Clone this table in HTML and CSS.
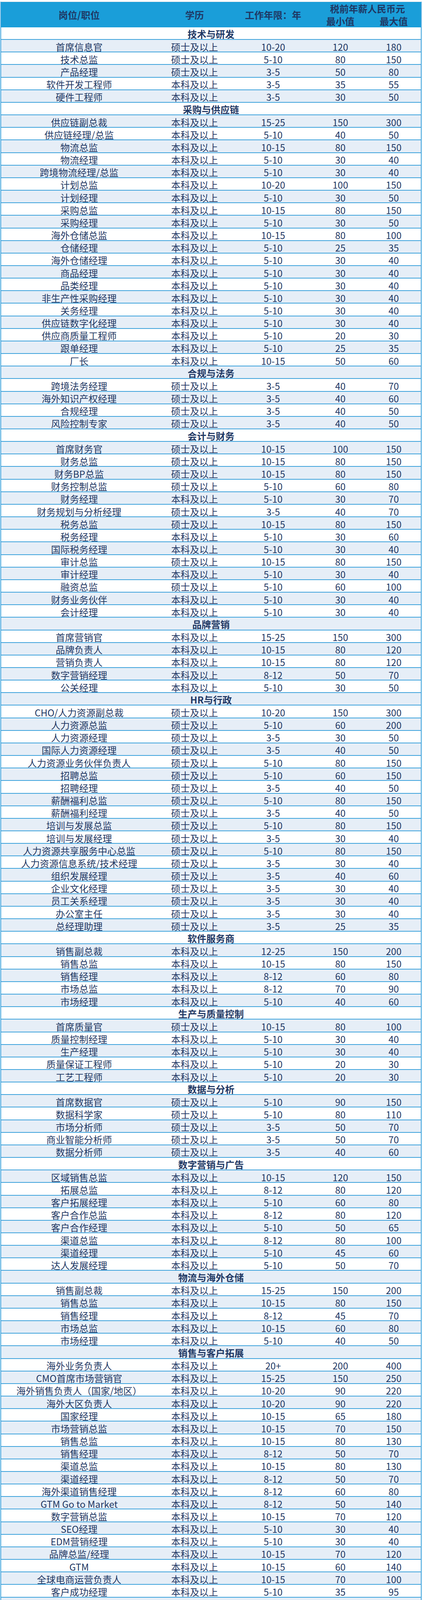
FILE: index.html
```html
<!DOCTYPE html>
<html lang="zh-CN">
<head>
<meta charset="utf-8">
<title>岗位薪酬表</title>
<link rel="stylesheet" href="styles.css">
</head>
<body>
<div class="sheet">
<div class="head">
<div class="hc h-job">岗位/职位</div>
<div class="hc h-edu">学历</div>
<div class="hc h-yrs">工作年限：年</div>
<div class="hc h-pay">税前年薪人民币元</div>
<div class="hc h-min">最小值</div>
<div class="hc h-max">最大值</div>
</div>
<div class="rows">
<div class="row sec">技术与研发</div>
<div class="row"><span>首席信息官</span><span>硕士及以上</span><span>10-20</span><span>120</span><span>180</span></div>
<div class="row"><span>技术总监</span><span>硕士及以上</span><span>5-10</span><span>80</span><span>150</span></div>
<div class="row"><span>产品经理</span><span>硕士及以上</span><span>3-5</span><span>50</span><span>80</span></div>
<div class="row"><span>软件开发工程师</span><span>本科及以上</span><span>3-5</span><span>35</span><span>55</span></div>
<div class="row"><span>硬件工程师</span><span>本科及以上</span><span>3-5</span><span>30</span><span>50</span></div>
<div class="row sec">采购与供应链</div>
<div class="row"><span>供应链副总裁</span><span>本科及以上</span><span>15-25</span><span>150</span><span>300</span></div>
<div class="row"><span>供应链经理/总监</span><span>本科及以上</span><span>5-10</span><span>40</span><span>50</span></div>
<div class="row"><span>物流总监</span><span>本科及以上</span><span>10-15</span><span>80</span><span>150</span></div>
<div class="row"><span>物流经理</span><span>本科及以上</span><span>5-10</span><span>30</span><span>40</span></div>
<div class="row"><span>跨境物流经理/总监</span><span>本科及以上</span><span>5-10</span><span>30</span><span>40</span></div>
<div class="row"><span>计划总监</span><span>本科及以上</span><span>10-20</span><span>100</span><span>150</span></div>
<div class="row"><span>计划经理</span><span>本科及以上</span><span>5-10</span><span>30</span><span>50</span></div>
<div class="row"><span>采购总监</span><span>本科及以上</span><span>10-15</span><span>80</span><span>150</span></div>
<div class="row"><span>采购经理</span><span>本科及以上</span><span>5-10</span><span>30</span><span>50</span></div>
<div class="row"><span>海外仓储总监</span><span>本科及以上</span><span>10-15</span><span>80</span><span>100</span></div>
<div class="row"><span>仓储经理</span><span>本科及以上</span><span>5-10</span><span>25</span><span>35</span></div>
<div class="row"><span>海外仓储经理</span><span>本科及以上</span><span>5-10</span><span>30</span><span>40</span></div>
<div class="row"><span>商品经理</span><span>本科及以上</span><span>5-10</span><span>30</span><span>40</span></div>
<div class="row"><span>品类经理</span><span>本科及以上</span><span>5-10</span><span>30</span><span>40</span></div>
<div class="row"><span>非生产性采购经理</span><span>本科及以上</span><span>5-10</span><span>30</span><span>40</span></div>
<div class="row"><span>关务经理</span><span>本科及以上</span><span>5-10</span><span>30</span><span>40</span></div>
<div class="row"><span>供应链数字化经理</span><span>本科及以上</span><span>5-10</span><span>30</span><span>40</span></div>
<div class="row"><span>供应商质量工程师</span><span>本科及以上</span><span>5-10</span><span>20</span><span>30</span></div>
<div class="row"><span>跟单经理</span><span>本科及以上</span><span>5-10</span><span>25</span><span>35</span></div>
<div class="row"><span>厂长</span><span>本科及以上</span><span>10-15</span><span>50</span><span>60</span></div>
<div class="row sec">合规与法务</div>
<div class="row"><span>跨境法务经理</span><span>硕士及以上</span><span>3-5</span><span>40</span><span>70</span></div>
<div class="row"><span>海外知识产权经理</span><span>硕士及以上</span><span>3-5</span><span>40</span><span>60</span></div>
<div class="row"><span>合规经理</span><span>硕士及以上</span><span>3-5</span><span>40</span><span>50</span></div>
<div class="row"><span>风险控制专家</span><span>硕士及以上</span><span>3-5</span><span>40</span><span>50</span></div>
<div class="row sec">会计与财务</div>
<div class="row"><span>首席财务官</span><span>硕士及以上</span><span>10-15</span><span>100</span><span>150</span></div>
<div class="row"><span>财务总监</span><span>硕士及以上</span><span>10-15</span><span>80</span><span>150</span></div>
<div class="row"><span>财务BP总监</span><span>硕士及以上</span><span>10-15</span><span>80</span><span>150</span></div>
<div class="row"><span>财务控制总监</span><span>硕士及以上</span><span>5-10</span><span>60</span><span>80</span></div>
<div class="row"><span>财务经理</span><span>本科及以上</span><span>5-10</span><span>30</span><span>70</span></div>
<div class="row"><span>财务规划与分析经理</span><span>硕士及以上</span><span>3-5</span><span>40</span><span>70</span></div>
<div class="row"><span>税务总监</span><span>硕士及以上</span><span>10-15</span><span>80</span><span>150</span></div>
<div class="row"><span>税务经理</span><span>本科及以上</span><span>5-10</span><span>30</span><span>60</span></div>
<div class="row"><span>国际税务经理</span><span>本科及以上</span><span>5-10</span><span>30</span><span>40</span></div>
<div class="row"><span>审计总监</span><span>硕士及以上</span><span>10-15</span><span>80</span><span>150</span></div>
<div class="row"><span>审计经理</span><span>本科及以上</span><span>5-10</span><span>30</span><span>40</span></div>
<div class="row"><span>融资总监</span><span>硕士及以上</span><span>5-10</span><span>60</span><span>100</span></div>
<div class="row"><span>财务业务伙伴</span><span>本科及以上</span><span>5-10</span><span>30</span><span>40</span></div>
<div class="row"><span>会计经理</span><span>本科及以上</span><span>5-10</span><span>30</span><span>40</span></div>
<div class="row sec">品牌营销</div>
<div class="row"><span>首席营销官</span><span>本科及以上</span><span>15-25</span><span>150</span><span>300</span></div>
<div class="row"><span>品牌负责人</span><span>本科及以上</span><span>10-15</span><span>80</span><span>120</span></div>
<div class="row"><span>营销负责人</span><span>本科及以上</span><span>10-15</span><span>80</span><span>120</span></div>
<div class="row"><span>数字营销经理</span><span>本科及以上</span><span>8-12</span><span>50</span><span>70</span></div>
<div class="row"><span>公关经理</span><span>本科及以上</span><span>5-10</span><span>30</span><span>50</span></div>
<div class="row sec">HR与行政</div>
<div class="row"><span>CHO/人力资源副总裁</span><span>硕士及以上</span><span>10-20</span><span>150</span><span>300</span></div>
<div class="row"><span>人力资源总监</span><span>硕士及以上</span><span>5-10</span><span>60</span><span>200</span></div>
<div class="row"><span>人力资源经理</span><span>硕士及以上</span><span>3-5</span><span>30</span><span>50</span></div>
<div class="row"><span>国际人力资源经理</span><span>硕士及以上</span><span>3-5</span><span>40</span><span>50</span></div>
<div class="row"><span>人力资源业务伙伴负责人</span><span>硕士及以上</span><span>5-10</span><span>80</span><span>150</span></div>
<div class="row"><span>招聘总监</span><span>硕士及以上</span><span>5-10</span><span>60</span><span>150</span></div>
<div class="row"><span>招聘经理</span><span>硕士及以上</span><span>3-5</span><span>40</span><span>50</span></div>
<div class="row"><span>薪酬福利总监</span><span>硕士及以上</span><span>5-10</span><span>80</span><span>150</span></div>
<div class="row"><span>薪酬福利经理</span><span>硕士及以上</span><span>3-5</span><span>40</span><span>50</span></div>
<div class="row"><span>培训与发展总监</span><span>硕士及以上</span><span>5-10</span><span>80</span><span>150</span></div>
<div class="row"><span>培训与发展经理</span><span>硕士及以上</span><span>3-5</span><span>30</span><span>40</span></div>
<div class="row"><span>人力资源共享服务中心总监</span><span>硕士及以上</span><span>5-10</span><span>80</span><span>150</span></div>
<div class="row"><span>人力资源信息系统/技术经理</span><span>硕士及以上</span><span>3-5</span><span>30</span><span>40</span></div>
<div class="row"><span>组织发展经理</span><span>硕士及以上</span><span>3-5</span><span>40</span><span>60</span></div>
<div class="row"><span>企业文化经理</span><span>硕士及以上</span><span>3-5</span><span>30</span><span>40</span></div>
<div class="row"><span>员工关系经理</span><span>硕士及以上</span><span>3-5</span><span>30</span><span>40</span></div>
<div class="row"><span>办公室主任</span><span>硕士及以上</span><span>3-5</span><span>30</span><span>40</span></div>
<div class="row"><span>总经理助理</span><span>硕士及以上</span><span>3-5</span><span>25</span><span>35</span></div>
<div class="row sec">软件服务商</div>
<div class="row"><span>销售副总裁</span><span>本科及以上</span><span>12-25</span><span>150</span><span>200</span></div>
<div class="row"><span>销售总监</span><span>本科及以上</span><span>10-15</span><span>80</span><span>150</span></div>
<div class="row"><span>销售经理</span><span>本科及以上</span><span>8-12</span><span>60</span><span>80</span></div>
<div class="row"><span>市场总监</span><span>本科及以上</span><span>8-12</span><span>70</span><span>90</span></div>
<div class="row"><span>市场经理</span><span>本科及以上</span><span>5-10</span><span>40</span><span>60</span></div>
<div class="row sec">生产与质量控制</div>
<div class="row"><span>首席质量官</span><span>硕士及以上</span><span>10-15</span><span>80</span><span>100</span></div>
<div class="row"><span>质量控制经理</span><span>本科及以上</span><span>5-10</span><span>30</span><span>40</span></div>
<div class="row"><span>生产经理</span><span>本科及以上</span><span>5-10</span><span>30</span><span>40</span></div>
<div class="row"><span>质量保证工程师</span><span>本科及以上</span><span>5-10</span><span>20</span><span>30</span></div>
<div class="row"><span>工艺工程师</span><span>本科及以上</span><span>5-10</span><span>20</span><span>30</span></div>
<div class="row sec">数据与分析</div>
<div class="row"><span>首席数据官</span><span>硕士及以上</span><span>5-10</span><span>90</span><span>150</span></div>
<div class="row"><span>数据科学家</span><span>硕士及以上</span><span>5-10</span><span>80</span><span>110</span></div>
<div class="row"><span>市场分析师</span><span>硕士及以上</span><span>3-5</span><span>50</span><span>70</span></div>
<div class="row"><span>商业智能分析师</span><span>硕士及以上</span><span>3-5</span><span>50</span><span>70</span></div>
<div class="row"><span>数据分析师</span><span>硕士及以上</span><span>3-5</span><span>40</span><span>60</span></div>
<div class="row sec">数字营销与广告</div>
<div class="row"><span>区域销售总监</span><span>本科及以上</span><span>10-15</span><span>120</span><span>150</span></div>
<div class="row"><span>拓展总监</span><span>本科及以上</span><span>8-12</span><span>80</span><span>120</span></div>
<div class="row"><span>客户拓展经理</span><span>本科及以上</span><span>5-10</span><span>60</span><span>80</span></div>
<div class="row"><span>客户合作总监</span><span>本科及以上</span><span>8-12</span><span>80</span><span>120</span></div>
<div class="row"><span>客户合作经理</span><span>本科及以上</span><span>5-10</span><span>50</span><span>65</span></div>
<div class="row"><span>渠道总监</span><span>本科及以上</span><span>8-12</span><span>80</span><span>100</span></div>
<div class="row"><span>渠道经理</span><span>本科及以上</span><span>5-10</span><span>45</span><span>60</span></div>
<div class="row"><span>达人发展经理</span><span>本科及以上</span><span>5-10</span><span>50</span><span>70</span></div>
<div class="row sec">物流与海外仓储</div>
<div class="row"><span>销售副总裁</span><span>本科及以上</span><span>15-25</span><span>150</span><span>200</span></div>
<div class="row"><span>销售总监</span><span>本科及以上</span><span>10-15</span><span>80</span><span>150</span></div>
<div class="row"><span>销售经理</span><span>本科及以上</span><span>8-12</span><span>45</span><span>70</span></div>
<div class="row"><span>市场总监</span><span>本科及以上</span><span>10-15</span><span>60</span><span>80</span></div>
<div class="row"><span>市场经理</span><span>本科及以上</span><span>5-10</span><span>40</span><span>50</span></div>
<div class="row sec">销售与客户拓展</div>
<div class="row"><span>海外业务负责人</span><span>本科及以上</span><span>20+</span><span>200</span><span>400</span></div>
<div class="row"><span>CMO首席市场营销官</span><span>本科及以上</span><span>15-25</span><span>150</span><span>250</span></div>
<div class="row"><span>海外销售负责人（国家/地区）</span><span>本科及以上</span><span>10-20</span><span>90</span><span>220</span></div>
<div class="row"><span>海外大区负责人</span><span>本科及以上</span><span>10-20</span><span>90</span><span>220</span></div>
<div class="row"><span>国家经理</span><span>本科及以上</span><span>10-15</span><span>65</span><span>180</span></div>
<div class="row"><span>市场营销总监</span><span>本科及以上</span><span>10-15</span><span>70</span><span>150</span></div>
<div class="row"><span>销售总监</span><span>本科及以上</span><span>10-15</span><span>80</span><span>130</span></div>
<div class="row"><span>销售经理</span><span>本科及以上</span><span>8-12</span><span>50</span><span>70</span></div>
<div class="row"><span>渠道总监</span><span>本科及以上</span><span>10-15</span><span>80</span><span>130</span></div>
<div class="row"><span>渠道经理</span><span>本科及以上</span><span>8-12</span><span>50</span><span>70</span></div>
<div class="row"><span>海外渠道销售经理</span><span>本科及以上</span><span>8-12</span><span>60</span><span>80</span></div>
<div class="row"><span>GTM Go to Market</span><span>本科及以上</span><span>8-12</span><span>50</span><span>140</span></div>
<div class="row"><span>数字营销总监</span><span>本科及以上</span><span>10-15</span><span>70</span><span>120</span></div>
<div class="row"><span>SEO经理</span><span>本科及以上</span><span>5-10</span><span>30</span><span>40</span></div>
<div class="row"><span>EDM营销经理</span><span>本科及以上</span><span>5-10</span><span>30</span><span>40</span></div>
<div class="row"><span>品牌总监/经理</span><span>本科及以上</span><span>10-15</span><span>70</span><span>120</span></div>
<div class="row"><span>GTM</span><span>本科及以上</span><span>10-15</span><span>60</span><span>140</span></div>
<div class="row"><span>全球电商运营负责人</span><span>本科及以上</span><span>10-15</span><span>70</span><span>100</span></div>
<div class="row"><span>客户成功经理</span><span>本科及以上</span><span>5-10</span><span>35</span><span>95</span></div>
<div class="row"><span>整合营销总监</span><span>本科及以上</span><span>10-15</span><span>60</span><span>88</span></div>
<div class="row"><span>DTC独立站运营主管/总监</span><span>本科及以上</span><span>10-15</span><span>45</span><span>80</span></div>
<div class="row"><span>亚马逊运营主管/总监</span><span>本科及以上</span><span>10-15</span><span>55</span><span>80</span></div>
<div class="row"><span>售后服务经理</span><span>本科及以上</span><span>5-10</span><span>30</span><span>45</span></div>
<div class="row sec">支付解决方案服务商</div>
<div class="row"><span>销售副总裁</span><span>本科及以上</span><span>20+</span><span>300</span><span>500</span></div>
<div class="row"><span>区域销售总监</span><span>本科及以上</span><span>15-25</span><span>150</span><span>300</span></div>
<div class="row"><span>业务拓展总监</span><span>本科及以上</span><span>12-20</span><span>120</span><span>180</span></div>
<div class="row"><span>客户拓展经理</span><span>本科及以上</span><span>10-15</span><span>50</span><span>80</span></div>
<div class="row"><span>客户管理总监</span><span>本科及以上</span><span>12-20</span><span>90</span><span>130</span></div>
<div class="row"><span>客户经理</span><span>本科及以上</span><span>10-15</span><span>50</span><span>80</span></div>
<div class="row"><span>市场总监</span><span>本科及以上</span><span>12-20</span><span>80</span><span>130</span></div>
<div class="row"><span>市场经理</span><span>本科及以上</span><span>10-15</span><span>45</span><span>60</span></div>
<div class="row"><span>渠道总监</span><span>本科及以上</span><span>12-20</span><span>80</span><span>130</span></div>
<div class="row"><span>渠道经理</span><span>本科及以上</span><span>10-15</span><span>50</span><span>70</span></div>
<div class="row sec">新能源与汽车</div>
<div class="row"><span>工厂总经理（东南亚）</span><span>硕士及以上</span><span>8-15</span><span>15</span><span>45</span></div>
<div class="row"><span>工厂总经理（拉美）</span><span>硕士及以上</span><span>8-12</span><span>45</span><span>80</span></div>
<div class="row"><span>工厂总经理（东欧）</span><span>硕士及以上</span><span>8-15</span><span>45</span><span>80</span></div>
<div class="row"><span>工厂总经理（中东/北非）</span><span>硕士及以上</span><span>8-15</span><span>30</span><span>65</span></div>
<div class="row"><span>电池技术总监/高级专家（全球布局）</span><span>硕士及以上</span><span>10-20</span><span>120</span><span>250</span></div>
<div class="row"><span>电驱系统研发总监（欧美）</span><span>硕士及以上</span><span>10-15</span><span>100</span><span>180</span></div>
<div class="row"><span>智能制造与数字化总监（全球）</span><span>硕士及以上</span><span>10-15</span><span>80</span><span>150</span></div>
<div class="row"><span>市场营销总监（欧美）</span><span>硕士及以上</span><span>10-15</span><span>85</span><span>220</span></div>
<div class="row"><span>市场销售总监（东南亚）</span><span>硕士及以上</span><span>8-12</span><span>50</span><span>120</span></div>
<div class="row"><span>新兴市场渠道与销售总监</span><span>硕士及以上</span><span>10-15</span><span>70</span><span>150</span></div>
<div class="row"><span>电动车/充电桩产品经理（欧洲）</span><span>硕士及以上</span><span>5-10</span><span>60</span><span>110</span></div>
<div class="row"><span>全球供应链总监（电池原材料）</span><span>硕士及以上</span><span>12-20</span><span>100</span><span>200</span></div>
<div class="row"><span>区域采购总监（东南亚）</span><span>硕士及以上</span><span>10-15</span><span>60</span><span>130</span></div>
<div class="row sec">高科技</div>
<div class="row"><span>软件开发工程师（后端/全栈）</span><span>硕士及以上</span><span>6-10</span><span>90</span><span>140</span></div>
<div class="row"><span>AI算法专家</span><span>硕士及以上</span><span>6-10</span><span>108</span><span>190</span></div>
<div class="row"><span>解决方案/云架构师</span><span>硕士及以上</span><span>6-10</span><span>120</span><span>170</span></div>
<div class="row"><span>资深产品经理</span><span>硕士及以上</span><span>6-10</span><span>95</span><span>150</span></div>
<div class="row"><span>网络安全/DevOps专家</span><span>硕士及以上</span><span>6-10</span><span>100</span><span>160</span></div>
<div class="row"><span>资深数据工程师</span><span>硕士及以上</span><span>6-10</span><span>80</span><span>120</span></div>
<div class="row sec">大健康<span class="note">(下列岗位/职位年薪单位USD万元)</span></div>
<div class="row"><span>首席科学家</span><span>硕士及以上</span><span>15-25</span><span>21</span><span>30</span></div>
<div class="row"><span>BD总监/VP</span><span>硕士及以上</span><span>10-15</span><span>22</span><span>35</span></div>
<div class="row"><span>RA总监/VP</span><span>硕士及以上</span><span>15-25</span><span>21</span><span>35</span></div>
<div class="row"><span>临床国家经理/VP</span><span>硕士及以上</span><span>10-25</span><span>28</span><span>45</span></div>
<div class="row"><span>海外国家经理/VP</span><span>硕士及以上</span><span>10-20</span><span>8</span><span>20</span></div>
<div class="row"><span>财务总监/VP</span><span>硕士及以上</span><span>8-15</span><span>16</span><span>30</span></div>
<div class="row"><span>人力资源总监</span><span>硕士及以上</span><span>8-15</span><span>15</span><span>30</span></div>
</div>
</div>
</body>
</html>
```

FILE: styles.css
```css
html, body {
  margin: 0;
  padding: 0;
  background: #ffffff;
}

body {
  font-family: "Noto Sans CJK SC", "Noto Sans", sans-serif;
  color: #1f3864;
  padding: 4px 1px 8px 1px;
}

.sheet {
  width: 1078px;
  box-sizing: border-box;
  border-top: 1px solid #d9dde2;
  border-left: 2px solid #3ea3dc;
  border-right: 2px solid #3ea3dc;
  font-size: 24px;
  line-height: 24px;
}

.head,
.row {
  display: grid;
  grid-template-columns: 399px 192px 210px 134px 139px;
}

.head {
  grid-template-rows: 33px 32px;
  background: #1a9ed9;
  font-weight: 700;
}

.hc {
  display: flex;
  align-items: center;
  justify-content: center;
  white-space: nowrap;
}

.h-job { grid-column: 1; grid-row: 1 / 3; }
.h-edu { grid-column: 2; grid-row: 1 / 3; }
.h-yrs { grid-column: 3; grid-row: 1 / 3; }
.h-pay { grid-column: 4 / 6; grid-row: 1; }
.h-min { grid-column: 4; grid-row: 2; }
.h-max { grid-column: 5; grid-row: 2; }

.row {
  height: 32.17px;
  box-sizing: border-box;
  border-bottom: 2px solid #3ea3dc;
  align-items: center;
  background: #ffffff;
}

.rows > .row:nth-child(even) {
  background: #e6eef7;
}

.row > span {
  display: block;
  padding-top: 5px;
  text-align: center;
  white-space: nowrap;
  min-width: 0;
  overflow: visible;
}

.row.sec {
  display: block;
  padding-top: 5px;
  text-align: center;
  font-weight: 700;
  white-space: nowrap;
}

.row.sec .note {
  font-weight: 400;
}
```
